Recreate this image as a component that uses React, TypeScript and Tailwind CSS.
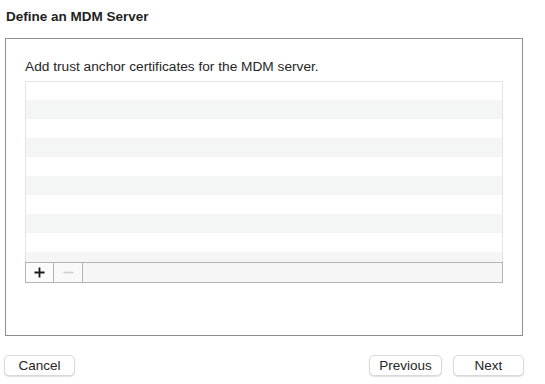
import React from 'react';

const rows = Array.from({ length: 10 }, (_, i) => i);

const MacButton = ({ label, width }: { label: string; width: string }) => (
  <button
    className={`${width} h-[21px] rounded-[5px] bg-white text-[13.5px] leading-[16px] text-[#262626] border border-[#d9d9d9] shadow-[0_1px_1px_rgba(0,0,0,0.12)]`}
  >
    {label}
  </button>
);

export default function App() {
  return (
    <div
      className="w-[545px] h-[384px] bg-white overflow-hidden"
      style={{ fontFamily: '"Liberation Sans", Arial, sans-serif' }}
    >
      <div className="pl-[6px] pt-[9px] text-[13.5px] leading-[16px] font-bold text-[#1f1f1f]">
        Define an MDM Server
      </div>

      {/* main panel */}
      <div className="ml-[5px] mt-[13px] w-[518px] h-[298px] border border-[#8e8e8e] pl-[19px] pt-[20px]">
        <div className="text-[13.7px] leading-[16px] text-[#262626]">
          Add trust anchor certificates for the MDM server.
        </div>

        <div className="mt-[6px] w-[478px]">
          <div className="h-[181px] border-x border-t border-[#e4e4e4] overflow-hidden">
            {rows.map((i) => (
              <div
                key={i}
                className={`${i === 0 ? 'h-[18px]' : 'h-[19px]'} ${i % 2 === 1 ? 'bg-[#f4f5f5]' : 'bg-white'}`}
              />
            ))}
          </div>

          {/* add / remove bar */}
          <div className="h-[21px] flex border border-[#b4b4b4] bg-[#f6f6f6]">
            <div className="w-[28px] flex items-center justify-center bg-[#fbfbfb] border-r border-[#b4b4b4]">
              <svg width="11" height="11" viewBox="0 0 11 11">
                <path d="M5.5 0.5v10M0.5 5.5h10" stroke="#1a1a1a" strokeWidth="1.8" />
              </svg>
            </div>
            <div className="w-[29px] flex items-center justify-center bg-[#f9f9f9] border-r border-[#b4b4b4]">
              <svg width="11" height="11" viewBox="0 0 11 11">
                <path d="M0.5 5.5h10" stroke="#cdcdcd" strokeWidth="1.6" />
              </svg>
            </div>
            <div className="flex-1" />
          </div>
        </div>
      </div>

      {/* footer buttons */}
      <div className="mt-[19px] flex items-center pl-[4px] pr-[21px]">
        <MacButton label="Cancel" width="w-[71px]" />
        <div className="flex-1" />
        <MacButton label="Previous" width="w-[73px]" />
        <div className="w-[11px]" />
        <MacButton label="Next" width="w-[71px]" />
      </div>
    </div>
  );
}
